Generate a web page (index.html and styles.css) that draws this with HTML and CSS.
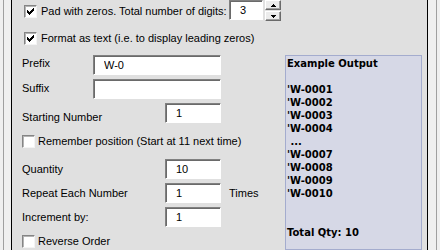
FILE: index.html
```html
<!DOCTYPE html>
<html lang="en">
<head>
    <meta charset="UTF-8">
    <title>Number Sequence Options</title>
    <link rel="stylesheet" href="styles.css">
</head>
<body>

    <div class="frame">
        <div class="edge edge-left"></div>

        <div class="panel">
            <div class="opt-row opt-pad">
                <span class="check">
                    <svg width="11" height="11" viewBox="0 0 11 11"><path d="M2 4h1v1h1v1h1v-1h1v-1h1v-1h1v-1h1v3h-1v1h-1v1h-1v1h-1v1h-1v-1h-1v-1h-1z"/></svg>
                </span>
                <span class="opt-label pad-label">Pad with zeros. Total number of digits:</span>
                <input type="text" class="field digits" value="3">
                <span class="spin">
                    <span class="spin-btn"><svg width="5" height="3" viewBox="0 0 5 3"><path d="M2 0h1v1h1v1h1v1h-5v-1h1v-1h1z"/></svg></span>
                    <span class="spin-btn"><svg width="5" height="3" viewBox="0 0 5 3"><path d="M0 0h5v1h-1v1h-1v1h-1v-1h-1v-1h-1z"/></svg></span>
                </span>
            </div>

            <div class="opt-row opt-text">
                <span class="check">
                    <svg width="11" height="11" viewBox="0 0 11 11"><path d="M2 4h1v1h1v1h1v-1h1v-1h1v-1h1v-1h1v3h-1v1h-1v1h-1v1h-1v1h-1v-1h-1v-1h-1z"/></svg>
                </span>
                <span class="opt-label">Format as text (i.e. to display leading zeros)</span>
            </div>

            <div class="body-area">
                <div class="form">
                    <div class="row">
                        <label class="lbl lbl-short lbl-prefix">Prefix</label>
                        <input type="text" class="field wide" value="W-0">
                    </div>
                    <div class="row">
                        <label class="lbl lbl-short lbl-suffix">Suffix</label>
                        <input type="text" class="field wide" value="">
                    </div>
                    <div class="row">
                        <label class="lbl lbl-long lbl-start">Starting Number</label>
                        <input type="text" class="field num" value="1">
                    </div>
                    <div class="row row-check">
                        <span class="check"></span>
                        <span class="check-text">Remember position (Start at 11 next time)</span>
                    </div>
                    <div class="row">
                        <label class="lbl lbl-long">Quantity</label>
                        <input type="text" class="field num" value="10">
                    </div>
                    <div class="row">
                        <label class="lbl lbl-long">Repeat Each Number</label>
                        <input type="text" class="field num" value="1">
                        <span class="unit">Times</span>
                    </div>
                    <div class="row">
                        <label class="lbl lbl-long">Increment by:</label>
                        <input type="text" class="field num" value="1">
                    </div>
                    <div class="row row-last">
                        <span class="check"></span>
                        <span class="check-text">Reverse Order</span>
                    </div>
                </div>

                <div class="output" id="output"></div>
            </div>
        </div>

        <div class="edge edge-right"></div>
    </div>

    <script>
        let lines = ["Example Output", "", "'W-0001", "'W-0002", "'W-0003", "'W-0004", " ...",
                     "'W-0007", "'W-0008", "'W-0009", "'W-0010", "", "", "Total Qty: 10"];

        let box = document.getElementById("output");
        lines.forEach(line => {
            box.innerHTML += `<div class="out-line">${line || "&nbsp;"}</div>`;
        });
    </script>

</body>
</html>
```

FILE: styles.css
```css
body { margin: 0; font-family: "Liberation Sans", Arial, sans-serif; font-size: 11px; color: #000; }
.frame { display: flex; width: 440px; height: 250px; background: #f0f0f0; overflow: hidden; }
.edge { width: 7px; height: 100%; }
.edge-left { margin-left: 3px; border-left: 1px solid #a0a0a0; }
.edge-right { width: 8px; border-right: 1px solid #a0a0a0; }
.panel { width: 415px; background: #e0e0e0; border-left: 1px solid #000; border-right: 1px solid #000; }

.opt-row { display: flex; align-items: center; padding-left: 12px; }
.opt-pad { height: 22px; }
.opt-text { height: 32px; }
.opt-label { margin-left: 4px; white-space: nowrap; }
.pad-label { width: 188px; }

.check { width: 13px; height: 13px; box-sizing: border-box; flex: none; background: #fff;
         border: 1px solid; border-color: #858585 #f4f4f4 #f4f4f4 #858585;
         box-shadow: inset 1px 1px 0 #b4b4b4; }
.check svg { display: block; }

.field { box-sizing: border-box; height: 20px; margin: 0; padding: 0 0 0 10px;
         font-family: "Liberation Sans", Arial, sans-serif; font-size: 11px; color: #000;
         background: #fff; border: 1px solid; border-color: #808080 #fff #fff #808080;
         box-shadow: inset 1px 1px 0 #6a6a6a; outline: none; }
.digits { width: 34px; align-self: flex-start; }
.wide { width: 128px; }
.num { width: 56px; }

.spin { display: flex; flex-direction: column; gap: 1px; margin-left: 2px; align-self: flex-start; }
.spin-btn { width: 16px; height: 10px; box-sizing: border-box; display: flex; align-items: center; justify-content: center;
            background: #ececec; border: 1px solid; border-color: #fff #6a6a6a #6a6a6a #fff;
            box-shadow: inset -1px -1px 0 #a0a0a0; }
.spin-btn svg { display: block; }

.body-area { display: flex; margin-top: 1px; }
.form { width: 263px; padding-left: 10px; }
.row { display: flex; align-items: center; height: 20px; margin-bottom: 4px; }
.row-check { height: 28px; }
.row-last { margin-bottom: 0; }
.lbl { white-space: nowrap; }
.lbl-short { width: 71px; }
.lbl-long { width: 143px; }
.lbl-prefix { margin-bottom: 5px; }
.lbl-suffix { margin-bottom: 2px; }
.lbl-start { margin-top: 8px; }
.check-text { margin-left: 3px; white-space: nowrap; }
.unit { margin-left: 8px; }

.output { width: 135px; height: 195px; padding-top: 1px; padding-left: 1px; box-sizing: border-box; width: 137px;
          background: #d6d8e6; border: 1px solid #a4acce;
          font-family: "DejaVu Sans", Verdana, sans-serif; font-size: 10px; font-weight: bold; line-height: 13px; }
.out-line { white-space: pre; }
```
